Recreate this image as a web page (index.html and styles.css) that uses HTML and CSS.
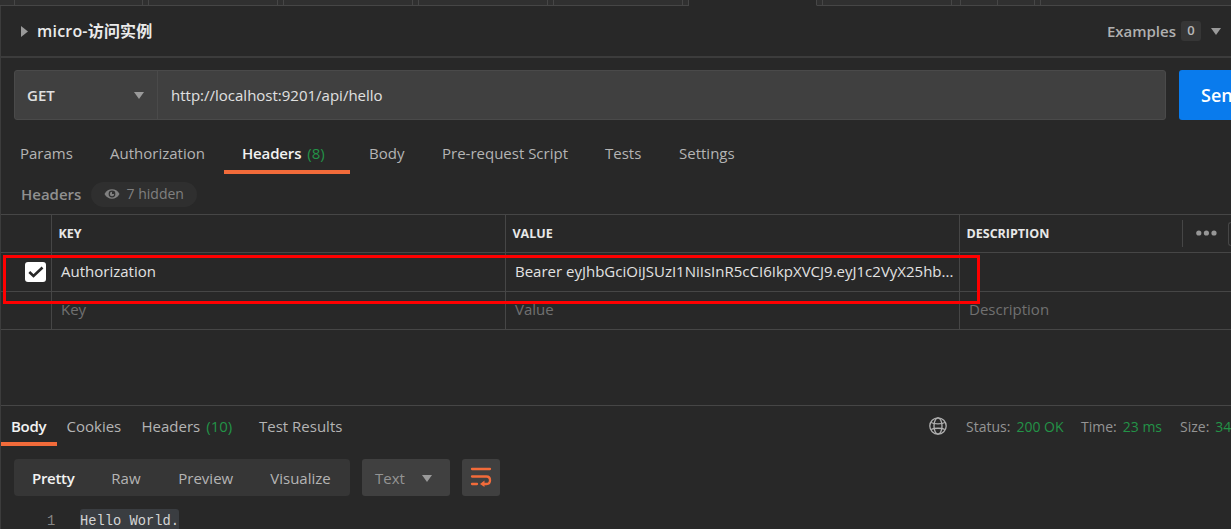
FILE: index.html
```
<!DOCTYPE html>
<html lang="zh-CN">
<head>
<meta charset="utf-8">
<title>micro-访问实例</title>
<link rel="stylesheet" href="styles.css">
</head>
<body>
<div class="app">
  <div class="tabstrip">
    <i class="t-first"></i><i class="t-tab"></i><i class="t-gap"></i><i class="t-tab"></i><i class="t-gap"></i><i class="t-tab"></i><i class="t-gap"></i><i class="t-tab"></i><i class="t-gap"></i><i class="t-tab"></i><i class="t-gap"></i><i class="t-active"></i><i class="t-gap"></i><i class="t-tab"></i><i class="t-space"></i><i class="t-btn"></i><i class="t-btn"></i><i class="t-gap"></i><i class="t-rest"></i>
  </div>
  <main class="panel">
    <header class="title-row">
      <svg class="tri-right" width="7" height="11" viewBox="0 0 7 11"><path d="M0 0L7 5.5L0 11Z"/></svg>
      <h1 class="title">micro-访问实例</h1>
      <span class="examples">Examples</span>
      <span class="badge">0</span>
      <svg class="tri-down" width="10" height="7" viewBox="0 0 10 7"><path d="M0 0H10L5 7Z"/></svg>
    </header>
    <section class="url-row">
      <div class="url-box">
        <div class="method"><span>GET</span><svg class="tri-down" width="10" height="7" viewBox="0 0 10 7"><path d="M0 0H10L5 7Z"/></svg></div>
        <div class="url">http://localhost:9201/api/hello</div>
      </div>
      <div class="send">Send</div>
    </section>
    <nav class="req-tabs">
      <span class="tab w-params">Params</span>
      <span class="tab w-auth">Authorization</span>
      <span class="tab w-headers active">Headers<b class="count">(8)</b></span>
      <span class="tab w-body">Body</span>
      <span class="tab w-script">Pre-request Script</span>
      <span class="tab w-tests">Tests</span>
      <span class="tab">Settings</span>
    </nav>
    <div class="sub-row">
      <span class="sub-title">Headers</span>
      <span class="pill">
        <svg width="16" height="12" viewBox="0 0 16 12"><path d="M.5 6C2.300 2.700 5 1.300 8 1.300s5.700 1.400 7.500 4.700C13.700 9.300 11 10.700 8 10.700S2.300 9.300.500 6Z" fill="#808080"/><circle cx="8" cy="6" r="3.400" fill="#303030"/><circle cx="8" cy="6" r="2.200" fill="#808080"/><path d="M8 6V3.500H10.500V6Z" fill="#303030"/></svg>
        <span>7 hidden</span>
      </span>
    </div>
    <div class="grid">
      <div class="row head">
        <div class="c0"></div><div class="c1">KEY</div><div class="c1">VALUE</div>
        <div class="c3"><span>DESCRIPTION</span><div class="more"><svg width="21" height="6" viewBox="0 0 21 6"><circle cx="2.800" cy="3" r="2.600"/><circle cx="10.400" cy="3" r="2.600"/><circle cx="18" cy="3" r="2.600"/></svg></div><div class="bulk"></div></div>
      </div>
      <div class="row item">
        <div class="c0"><span class="check"><svg width="16" height="12" viewBox="0 0 16 12"><path d="M1.300 6L5.500 10L14.500 1.500" fill="none" stroke="#282828" stroke-width="2.600"/></svg></span></div>
        <div class="c1">Authorization</div><div class="c1">Bearer eyJhbGciOiJSUzI1NiIsInR5cCI6IkpXVCJ9.eyJ1c2VyX25hb...</div><div class="c3"></div>
      </div>
      <div class="row blank">
        <div class="c0"></div><div class="c1">Key</div><div class="c1">Value</div><div class="c3">Description</div>
      </div>
      <div class="highlight"></div>
    </div>
    <section class="response">
      <div class="res-row">
        <span class="res-tab r-body active">Body</span>
        <span class="res-tab r-cookies">Cookies</span>
        <span class="res-tab r-headers">Headers<b class="count">(10)</b></span>
        <span class="res-tab r-tests">Test Results</span>
        <svg class="globe" width="18" height="18" viewBox="0 0 18 18"><circle cx="9" cy="9" r="8.200"/><ellipse cx="9" cy="9" rx="4" ry="8.200"/><path d="M2 5.500C5 7.200 13 7.200 16 5.500M2 12.500C5 10.800 13 10.800 16 12.500"/></svg>
        <span class="stat s-status">Status:<em>200 OK</em></span>
        <span class="stat s-time">Time:<em>23 ms</em></span>
        <span class="stat s-size">Size:<em>345 B</em></span>
      </div>
      <div class="tool-row">
        <div class="views"><span class="view v1">Pretty</span><span class="view v2">Raw</span><span class="view v3">Preview</span><span class="view">Visualize</span></div>
        <div class="format"><span>Text</span><svg class="tri-down" width="10" height="7" viewBox="0 0 10 7"><path d="M0 0H10L5 7Z"/></svg></div>
        <div class="wrap"><svg width="22" height="20" viewBox="0 0 22 20"><path d="M2 2H20M2 9.500H16.500C21.200 9.500 21.200 17 16.500 17H13M2 17H7" fill="none" stroke="#f26b3a" stroke-width="2.300" stroke-linecap="round"/><path d="M14.500 13.500V20L10 17Z" fill="#f26b3a"/></svg></div>
      </div>
      <div class="code"><span class="ln">1</span><span class="src">Hello World.</span></div>
    </section>
  </main>
</div>
</body>
</html>
```
FILE: styles.css
```
* { box-sizing: border-box; }
body { margin: 0; background: #282828; color: #b4b4b4; font: 15px/20px "Open Sans", "Noto Sans CJK SC", sans-serif; overflow: hidden; }
.app { width: 1231px; height: 529px; overflow: hidden; display: flex; flex-direction: column; }
svg { display: block; flex: none; }
.tabstrip { display: flex; height: 6px; flex: none; }
.tabstrip i { flex: none; border-right: 1px solid #464646; border-bottom: 1px solid #464646; background: #303030; }
.tabstrip .t-first { width: 15px; }
.tabstrip .t-tab { width: 129px; }
.tabstrip .t-tab:nth-child(2) { width: 128px; }
.tabstrip .t-gap { width: 6px; }
.tabstrip .t-active { width: 128px; background: #282828; border-bottom-color: #282828; }
.tabstrip .t-space { width: 9px; }
.tabstrip .t-btn { width: 37px; }
.tabstrip .t-rest { flex: 1; border-right: 0; }
.panel { height: 523px; border-left: 1px solid #3c3c3c; display: flex; flex-direction: column; }
.title-row { height: 52px; flex: none; border-bottom: 2px solid #3c3c3c; display: flex; align-items: center; padding: 0 10px 0 20px; }
.tri-right { fill: #9a9a9a; margin-right: 9px; }
.tri-down { fill: #9a9a9a; }
.title { margin: 0; color: #ebebeb; font-size: 16px; font-weight: 600; letter-spacing: .2px; flex: 1; }
.examples { font-weight: 600; color: #b0b0b0; margin-right: 5px; }
.badge { width: 20px; height: 20px; background: #363636; border-radius: 3px; color: #b8b8b8; font-size: 13px; font-weight: 600; line-height: 19px; text-align: center; margin-right: 10px; }
.url-row { display: flex; height: 50px; margin: 12px 0 0 13px; flex: none; gap: 13px; }
.url-box { width: 1152px; flex: none; display: flex; border: 1px solid #4a4a4a; border-radius: 3px; background: #404040; color: #e0e0e0; }
.method { width: 143px; border-right: 1px solid #4a4a4a; display: flex; align-items: center; justify-content: space-between; padding: 0 13px 0 12px; font-weight: 600; }
.url { line-height: 48px; padding-left: 13px; }
.send { width: 110px; flex: none; background: #097bed; border-radius: 3px; color: #fff; font-size: 18px; font-weight: 600; line-height: 50px; padding-left: 22px; }
.req-tabs { display: flex; height: 54px; flex: none; white-space: nowrap; }
.tab { flex: none; padding-left: 19px; line-height: 66px; }
.count { font-weight: 400; color: #239347; margin-left: 6px; letter-spacing: 0; }
.active { color: #f2f2f2; font-weight: 600; letter-spacing: -.15px; }
.w-params { width: 90px; }
.w-auth { width: 133px; }
.w-headers { width: 126px; padding-left: 18px; border-bottom: 4px solid #f26b3a; }
.w-body { width: 73px; }
.w-script { width: 163px; }
.w-tests { width: 74px; }
.sub-row { display: flex; height: 40px; flex: none; align-items: center; padding-left: 20px; gap: 9px; }
.sub-title { color: #909090; font-weight: 600; width: 61px; }
.pill { display: flex; align-items: center; gap: 7px; height: 25px; padding: 0 13px 0 12.600px; border-radius: 13px; background: #2f2f2f; color: #808080; font-size: 14px; font-weight: 500; }
.grid { position: relative; height: 116px; flex: none; border-top: 1px solid #464646; }
.row { display: flex; border-bottom: 1px solid #464646; }
.c0 { width: 51px; border-right: 1px solid #464646; display: flex; align-items: center; padding-left: 24px; flex: none; }
.c1 { width: 454px; flex: none; border-right: 1px solid #464646; padding-left: 9px; white-space: nowrap; }
.c3 { flex: 1; padding-left: 9px; }
.head { height: 38px; font-size: 12.500px; line-height: 37px; color: #e8e8e8; font-weight: 700; }
.head .c1, .head .c3 { padding-left: 6.500px; }
.head .c3 { display: flex; align-items: center; }
.more { width: 46px; height: 27px; margin-left: auto; border-left: 1px solid #464646; display: flex; align-items: center; padding-left: 13px; fill: #969696; }
.more svg { margin-bottom: 1px; }
.bulk { width: 3px; height: 24px; border: 1px solid #464646; border-right: 0; border-radius: 3px 0 0 3px; }
.item { height: 39px; line-height: 36px; color: #e2e2e2; }
.check { width: 21px; height: 20px; background: #fff; border-radius: 3px; display: flex; align-items: center; justify-content: center; }
.blank { height: 38px; line-height: 34px; color: #707070; }
.highlight { position: absolute; left: 2px; top: 40px; width: 977px; height: 49px; border: 3px solid #f00; }
.response { margin-top: 75px; height: 124px; flex: none; border-top: 1px solid #464646; overflow: hidden; }
.res-row { display: flex; height: 40px; line-height: 41px; white-space: nowrap; }
.res-row > * { flex: none; }
.r-body { width: 56px; padding-left: 10px; border-bottom: 4px solid #f26b3a; margin-right: 9.500px; letter-spacing: -.3px; }
.r-cookies { width: 75px; }
.r-headers { width: 117.500px; }
.r-tests { width: 670px; }
.globe { margin-top: 11px; margin-right: 19px; fill: none; stroke: #b0b0b0; stroke-width: 1.300; }
.stat { font-size: 14px; color: #949494; }
.stat em { font-style: normal; color: #239347; margin-left: 6px; }
.s-status { width: 115px; }
.s-time { width: 99px; }
.tool-row { display: flex; height: 37px; margin: 13px 0 0 13px; gap: 12px; line-height: 38px; }
.views { width: 336px; display: flex; background: #363636; border-radius: 4px; padding-left: 18px; }
.v1 { width: 79.300px; color: #f2f2f2; font-weight: 600; letter-spacing: -.3px; }
.v2 { width: 67px; }
.v3 { width: 92px; }
.format { width: 88px; background: #404040; border-radius: 3px; color: #949494; display: flex; align-items: center; justify-content: space-between; padding: 0 18px 0 13px; }
.format svg { margin-top: 2px; }
.wrap { width: 38px; background: #404040; border-radius: 3px; display: flex; align-items: center; justify-content: center; }
.wrap svg { margin-bottom: 1px; }
.code { display: flex; height: 24px; margin-top: 13px; font: 13.750px/25px "Liberation Mono", "DejaVu Sans Mono", monospace; }
.ln { width: 79px; padding-left: 46px; color: #858585; }
.src { background: #3a3d41; color: #d4d4d4; border-radius: 3px 3px 0 0; white-space: pre; }
```
